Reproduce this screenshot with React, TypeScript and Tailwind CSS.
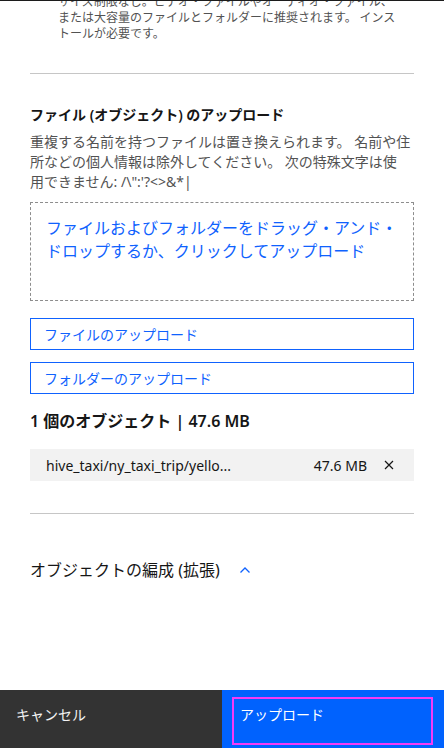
function ChevronUp() {
  return (
    <svg width="12" height="8" viewBox="0 0 12 8" fill="none">
      <path d="M1.5 6.5 L6 2 L10.5 6.5" stroke="#0f62fe" strokeWidth="1.3" />
    </svg>
  )
}

function App() {
  return (
    <div className="w-[444px] h-[748px] flex flex-col overflow-hidden bg-white text-[#161616] font-['Noto_Sans','Noto_Sans_CJK_JP',sans-serif]">
      <div className="h-px bg-[#1c1c1c] shrink-0"></div>

      <div className="flex-1 overflow-hidden px-[30px] flex flex-col">
        {/* upload tool note (scrolled) */}
        <p className="mt-[-8px] ml-[28px] text-[12px] leading-[16px] text-[#525252] whitespace-nowrap font-['Noto_Sans_CJK_JP',sans-serif]">
          サイズ制限なし。ビデオ・ファイルやオーディオ・ファイル、
          <br />
          または大容量のファイルとフォルダーに推奨されます。 インス
          <br />
          トールが必要です。
        </p>

        <div className="mt-[32px] h-px bg-[#c6c6c6]"></div>

        <h3 className="mt-[31px] text-[14px] leading-[20px] font-semibold">
          ファイル (オブジェクト) のアップロード
        </h3>
        <p className="mt-[7px] text-[14px] leading-[20px] text-[#525252] whitespace-nowrap">
          重複する名前を持つファイルは置き換えられます。 名前や住
          <br />
          所などの個人情報は除外してください。 次の特殊文字は使
          <br />
          用できません: /\":'?&lt;&gt;&amp;*|
        </p>

        <div className="mt-[10px] h-[99px] border border-dashed border-[#8d8d8d] pl-[15px] pt-[13px]">
          <p className="text-[16px] leading-[23px] text-[#0f62fe] whitespace-nowrap font-['Noto_Sans_CJK_JP',sans-serif]">
            ファイルおよびフォルダーをドラッグ・アンド・
            <br />
            ドロップするか、クリックしてアップロード
          </p>
        </div>

        <button className="mt-[17px] h-[32px] border border-[#0f62fe] text-left pl-[13px] text-[14px] text-[#0f62fe]">
          ファイルのアップロード
        </button>
        <button className="mt-[12px] h-[32px] border border-[#0f62fe] text-left pl-[13px] text-[14px] text-[#0f62fe]">
          フォルダーのアップロード
        </button>

        <p className="mt-[15px] text-[16px] leading-[24px] font-semibold">
          1 個のオブジェクト | 47.6 MB
        </p>

        <div className="mt-[16px] h-[32px] bg-[#f2f2f2] flex items-center pl-[16px] pr-[9px] text-[14px]">
          <span className="flex-1 truncate">hive_taxi/ny_taxi_trip/yello...</span>
          <span className="ml-2">47.6 MB</span>
          <span className="w-8 flex items-center justify-center ml-[6px]">
            <svg width="10" height="10" viewBox="0 0 10 10">
              <path d="M1 1 L9 9 M9 1 L1 9" stroke="#161616" strokeWidth="1.2" />
            </svg>
          </span>
        </div>

        <div className="mt-[32px] h-px bg-[#c6c6c6]"></div>

        <div className="mt-[44px] flex items-center gap-[19px] text-[16px] leading-[24px]">
          <span>オブジェクトの編成 (拡張)</span>
          <ChevronUp />
        </div>
      </div>

      {/* footer actions */}
      <div className="h-[58px] shrink-0 flex text-[14px]">
        <div className="w-[222px] bg-[#333333] text-[#f4f4f4] pl-[16px] pt-[15px] leading-[20px]">
          キャンセル
        </div>
        <div className="flex-1 bg-[#0062fe] pt-[7px] pl-[10px] pr-[11px] pb-[3px]">
          <div className="h-full border-2 border-[#f53af5] text-white pl-[6px] pt-[6px] leading-[20px]">
            アップロード
          </div>
        </div>
      </div>
    </div>
  )
}

export default App
